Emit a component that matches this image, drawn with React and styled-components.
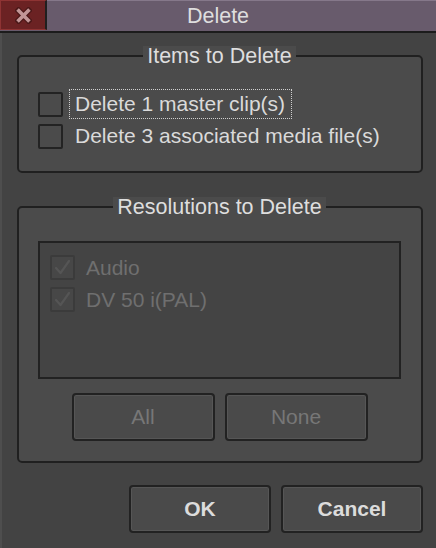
import React from "react";
import styled, { createGlobalStyle } from "styled-components";

const GlobalStyle = createGlobalStyle`
  html, body {
    margin: 0;
    padding: 0;
    background: #434343;
    overflow: hidden;
  }
  body {
    font-family: "Liberation Sans", Arial, sans-serif;
  }
`;

const Window = styled.div`
  width: 436px;
  height: 548px;
  display: flex;
  flex-direction: column;
  background: #434343;
`;

const TitleBar = styled.div`
  height: 30px;
  display: flex;
  background: #685b6c;
  border-top: 1px solid #85788a;
  border-bottom: 2px solid #1c1c1c;
  box-sizing: content-box;
`;

const CloseBox = styled.div`
  width: 44px;
  height: 28px;
  margin-top: -1px;
  background: #6b2223;
  border: 1px solid #8e3333;
  border-right: 2px solid #1f1f1f;
  display: flex;
  align-items: center;
  justify-content: center;
`;

const Title = styled.div`
  flex: 1;
  display: flex;
  align-items: center;
  justify-content: center;
  margin-left: -47px;
  color: #dedede;
  font-size: 21.5px;
  line-height: 30px;
  pointer-events: none;
`;

const Body = styled.div`
  flex: 1;
  border-left: 2px solid #4e4e4e;
  padding: 13px 13px 0 15px;
  display: flex;
  flex-direction: column;
`;

const Group = styled.fieldset`
  margin: ${(p) => (p.$first ? "0" : "24px")} 0 0 0;
  padding: ${(p) => p.$pad};
  border: 2px solid #202020;
  border-radius: 5px;
  background: #4b4b4b;
  min-width: 0;
`;

const Legend = styled.legend`
  margin: 0 auto;
  padding: 0 4px;
  background: #4b4b4b;
  color: #dedede;
  font-size: 21.5px;
  line-height: 20px;
`;

const Rows = styled.div`
  display: flex;
  flex-direction: column;
  gap: 2px;
  margin-top: -1px;
`;

const Row = styled.div`
  height: 30px;
  display: flex;
  align-items: center;
`;

const Box = styled.span`
  width: 25px;
  height: 25px;
  box-sizing: border-box;
  border: 2px solid ${(p) => (p.$disabled ? "#3b3b3b" : "#232323")};
  border-radius: 2px;
  background: ${(p) => (p.$disabled ? "#474747" : "transparent")};
  display: flex;
  align-items: center;
  justify-content: center;
  flex-shrink: 0;
`;

const Label = styled.span`
  margin-left: ${(p) => p.$gap}px;
  padding: 0 6px 0 5px;
  height: 30px;
  box-sizing: border-box;
  border: 1px dotted ${(p) => (p.$focused ? "#d0d0d0" : "transparent")};
  display: flex;
  align-items: center;
  color: ${(p) => (p.$disabled ? "#6f6f6f" : "#dadada")};
  font-size: 21px;
  white-space: nowrap;
`;

const ListBox = styled.div`
  height: 138px;
  box-sizing: border-box;
  border: 2px solid #222222;
  background: #444444;
  padding: 12px 10px;
`;

const ListRows = styled.div`
  display: flex;
  flex-direction: column;
  gap: 7px;
`;

const ListRow = styled.div`
  height: 25px;
  display: flex;
  align-items: center;
`;

const ButtonRow = styled.div`
  display: flex;
  justify-content: ${(p) => p.$justify};
  gap: 10px;
  margin-top: ${(p) => p.$top}px;
`;

const Button = styled.button`
  width: ${(p) => p.$w}px;
  height: 48px;
  border: 2px solid #222222;
  border-radius: 4px;
  background: #4a4a4a;
  box-shadow: inset 0 0 0 1px #565656;
  color: ${(p) => (p.disabled ? "#777777" : "#dcdcdc")};
  font-family: "Liberation Sans", Arial, sans-serif;
  font-size: 21px;
  font-weight: ${(p) => (p.$bold ? 700 : 400)};
  padding: 0;
`;

function Check() {
  return (
    <svg width="17" height="17" viewBox="0 0 17 17">
      <path
        d="M2 9 L6.5 14 L15 2"
        fill="none"
        stroke="#555555"
        strokeWidth="2.2"
        strokeLinecap="round"
        strokeLinejoin="round"
      />
    </svg>
  );
}

function CloseIcon() {
  return (
    <svg width="17" height="17" viewBox="0 0 17 17">
      <path
        d="M3.5 3.5 L13.5 13.5 M13.5 3.5 L3.5 13.5"
        stroke="#4a1818"
        strokeWidth="6"
        strokeLinecap="square"
      />
      <path
        d="M3.8 3.8 L13.2 13.2 M13.2 3.8 L3.8 13.2"
        stroke="#c29697"
        strokeWidth="3.6"
        strokeLinecap="square"
      />
    </svg>
  );
}

const items = [
  { text: "Delete 1 master clip(s)", focused: true },
  { text: "Delete 3 associated media file(s)", focused: false },
];

const resolutions = ["Audio", "DV 50 i(PAL)"];

export default function App() {
  return (
    <Window>
      <GlobalStyle />
      <TitleBar>
        <CloseBox>
          <CloseIcon />
        </CloseBox>
        <Title>Delete</Title>
      </TitleBar>
      <Body>
        <Group $first $pad="24px 20px 20px 19px">
          <Legend>Items to Delete</Legend>
          <Rows>
            {items.map((it) => (
              <Row key={it.text}>
                <Box />
                <Label $gap={6} $focused={it.focused}>
                  {it.text}
                </Label>
              </Row>
            ))}
          </Rows>
        </Group>

        <Group $pad="24px 20px 20px 19px">
          <Legend>Resolutions to Delete</Legend>
          <ListBox>
            <ListRows>
              {resolutions.map((r) => (
                <ListRow key={r}>
                  <Box $disabled>
                    <Check />
                  </Box>
                  <Label $gap={5} $disabled>
                    {r}
                  </Label>
                </ListRow>
              ))}
            </ListRows>
          </ListBox>
          <ButtonRow $justify="center" $top={14}>
            <Button $w={143} disabled>
              All
            </Button>
            <Button $w={143} disabled>
              None
            </Button>
          </ButtonRow>
        </Group>

        <ButtonRow $justify="flex-end" $top={22}>
          <Button $w={142} $bold>
            OK
          </Button>
          <Button $w={142} $bold>
            Cancel
          </Button>
        </ButtonRow>
      </Body>
    </Window>
  );
}
